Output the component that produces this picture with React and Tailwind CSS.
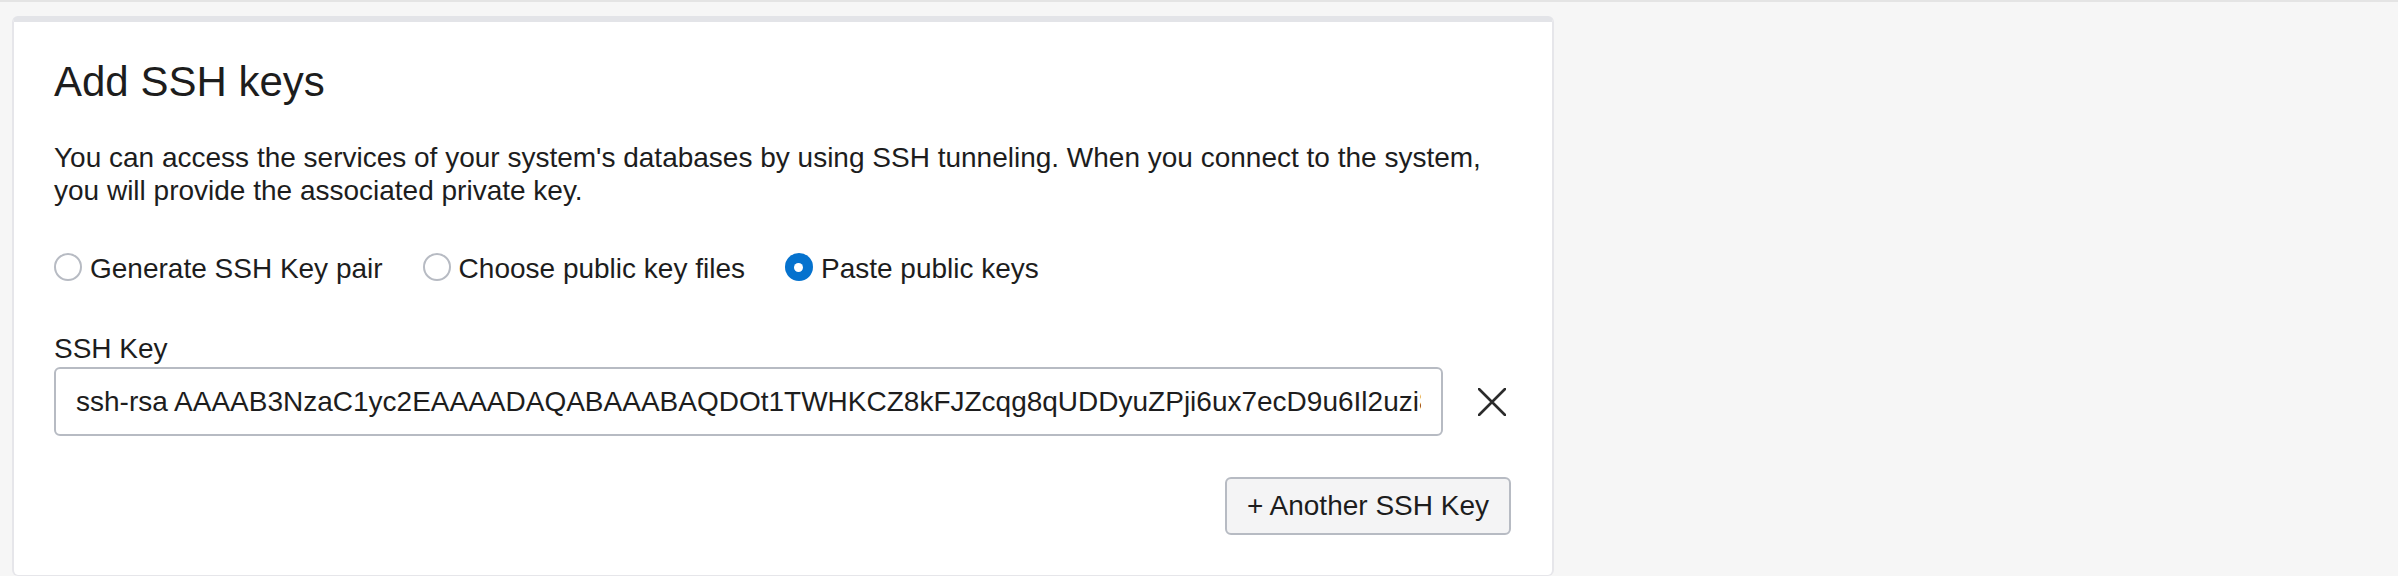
import React from "react";

function Radio({ checked, label }) {
  return (
    <label className="flex items-center gap-[8px] leading-[34px]">
      {checked ? (
        <span className="mb-[4px] flex h-[28px] w-[28px] items-center justify-center rounded-full bg-[#0572ce]">
          <span className="h-[9px] w-[9px] rounded-full bg-white" />
        </span>
      ) : (
        <span className="mb-[4px] h-[28px] w-[28px] rounded-full border-2 border-[#b7bbc3] bg-white" />
      )}
      <span>{label}</span>
    </label>
  );
}

export default function App() {
  const key =
    "ssh-rsa AAAAB3NzaC1yc2EAAAADAQABAAABAQDOt1TWHKCZ8kFJZcqg8qUDDyuZPji6ux7ecD9u6Il2uzi8Xq3vJ9mLw0sKpT4RbN2yHcF7dGe5aUo1iZlM";
  return (
    <div
      className="min-h-[576px] w-full bg-[#f6f6f6] text-[#1d1d1d]"
      style={{ fontFamily: '"Liberation Sans", Arial, Helvetica, sans-serif' }}
    >
      <div className="h-[2px] w-full bg-[#e4e4e4]" />
      <div className="ml-[12px] mt-[14px] w-[1542px] rounded-[6px] border-x-2 border-t-[6px] border-b border-x-[#e6e6ea] border-t-[#e3e4e8] border-b-[#e6e6ea] bg-white px-[40px] pb-[40px] pt-[35px]">
        <h1 className="text-[42px] font-normal leading-[50px]">Add SSH keys</h1>
        <p className="mt-[34px] text-[28px] leading-[33px]">
          You can access the services of your system's databases by using SSH tunneling. When you connect to the system,
          you will provide the associated private key.
        </p>
        <div className="mt-[45px] flex items-center gap-[40px] text-[28px]">
          <Radio label="Generate SSH Key pair" />
          <Radio label="Choose public key files" />
          <Radio checked label="Paste public keys" />
        </div>
        <div className="mt-[46px] text-[28px] leading-[34px]">SSH Key</div>
        <div className="mt-[1px] flex items-center">
          <input
            type="text"
            readOnly
            value={key}
            className="h-[69px] flex-1 rounded-[6px] border-2 border-[#b7bbc3] bg-white px-[20px] text-[28px] text-[#1d1d1d] outline-none"
          />
          <button className="ml-[29px] flex h-[40px] w-[40px] items-center justify-center">
            <svg width="28" height="28" viewBox="0 0 28 28" fill="none">
              <path d="M1 1 L27 27 M27 1 L1 27" stroke="#2b2b2b" strokeWidth="2.6" strokeLinecap="round" />
            </svg>
          </button>
        </div>
        <div className="mt-[41px] flex justify-end">
          <button className="mr-[1px] h-[58px] rounded-[6px] border-2 border-[#b7bbc3] bg-[#f4f4f5] px-[20px] text-[28px] leading-[34px] text-[#1d1d1d]">
            + Another SSH Key
          </button>
        </div>
      </div>
    </div>
  );
}
